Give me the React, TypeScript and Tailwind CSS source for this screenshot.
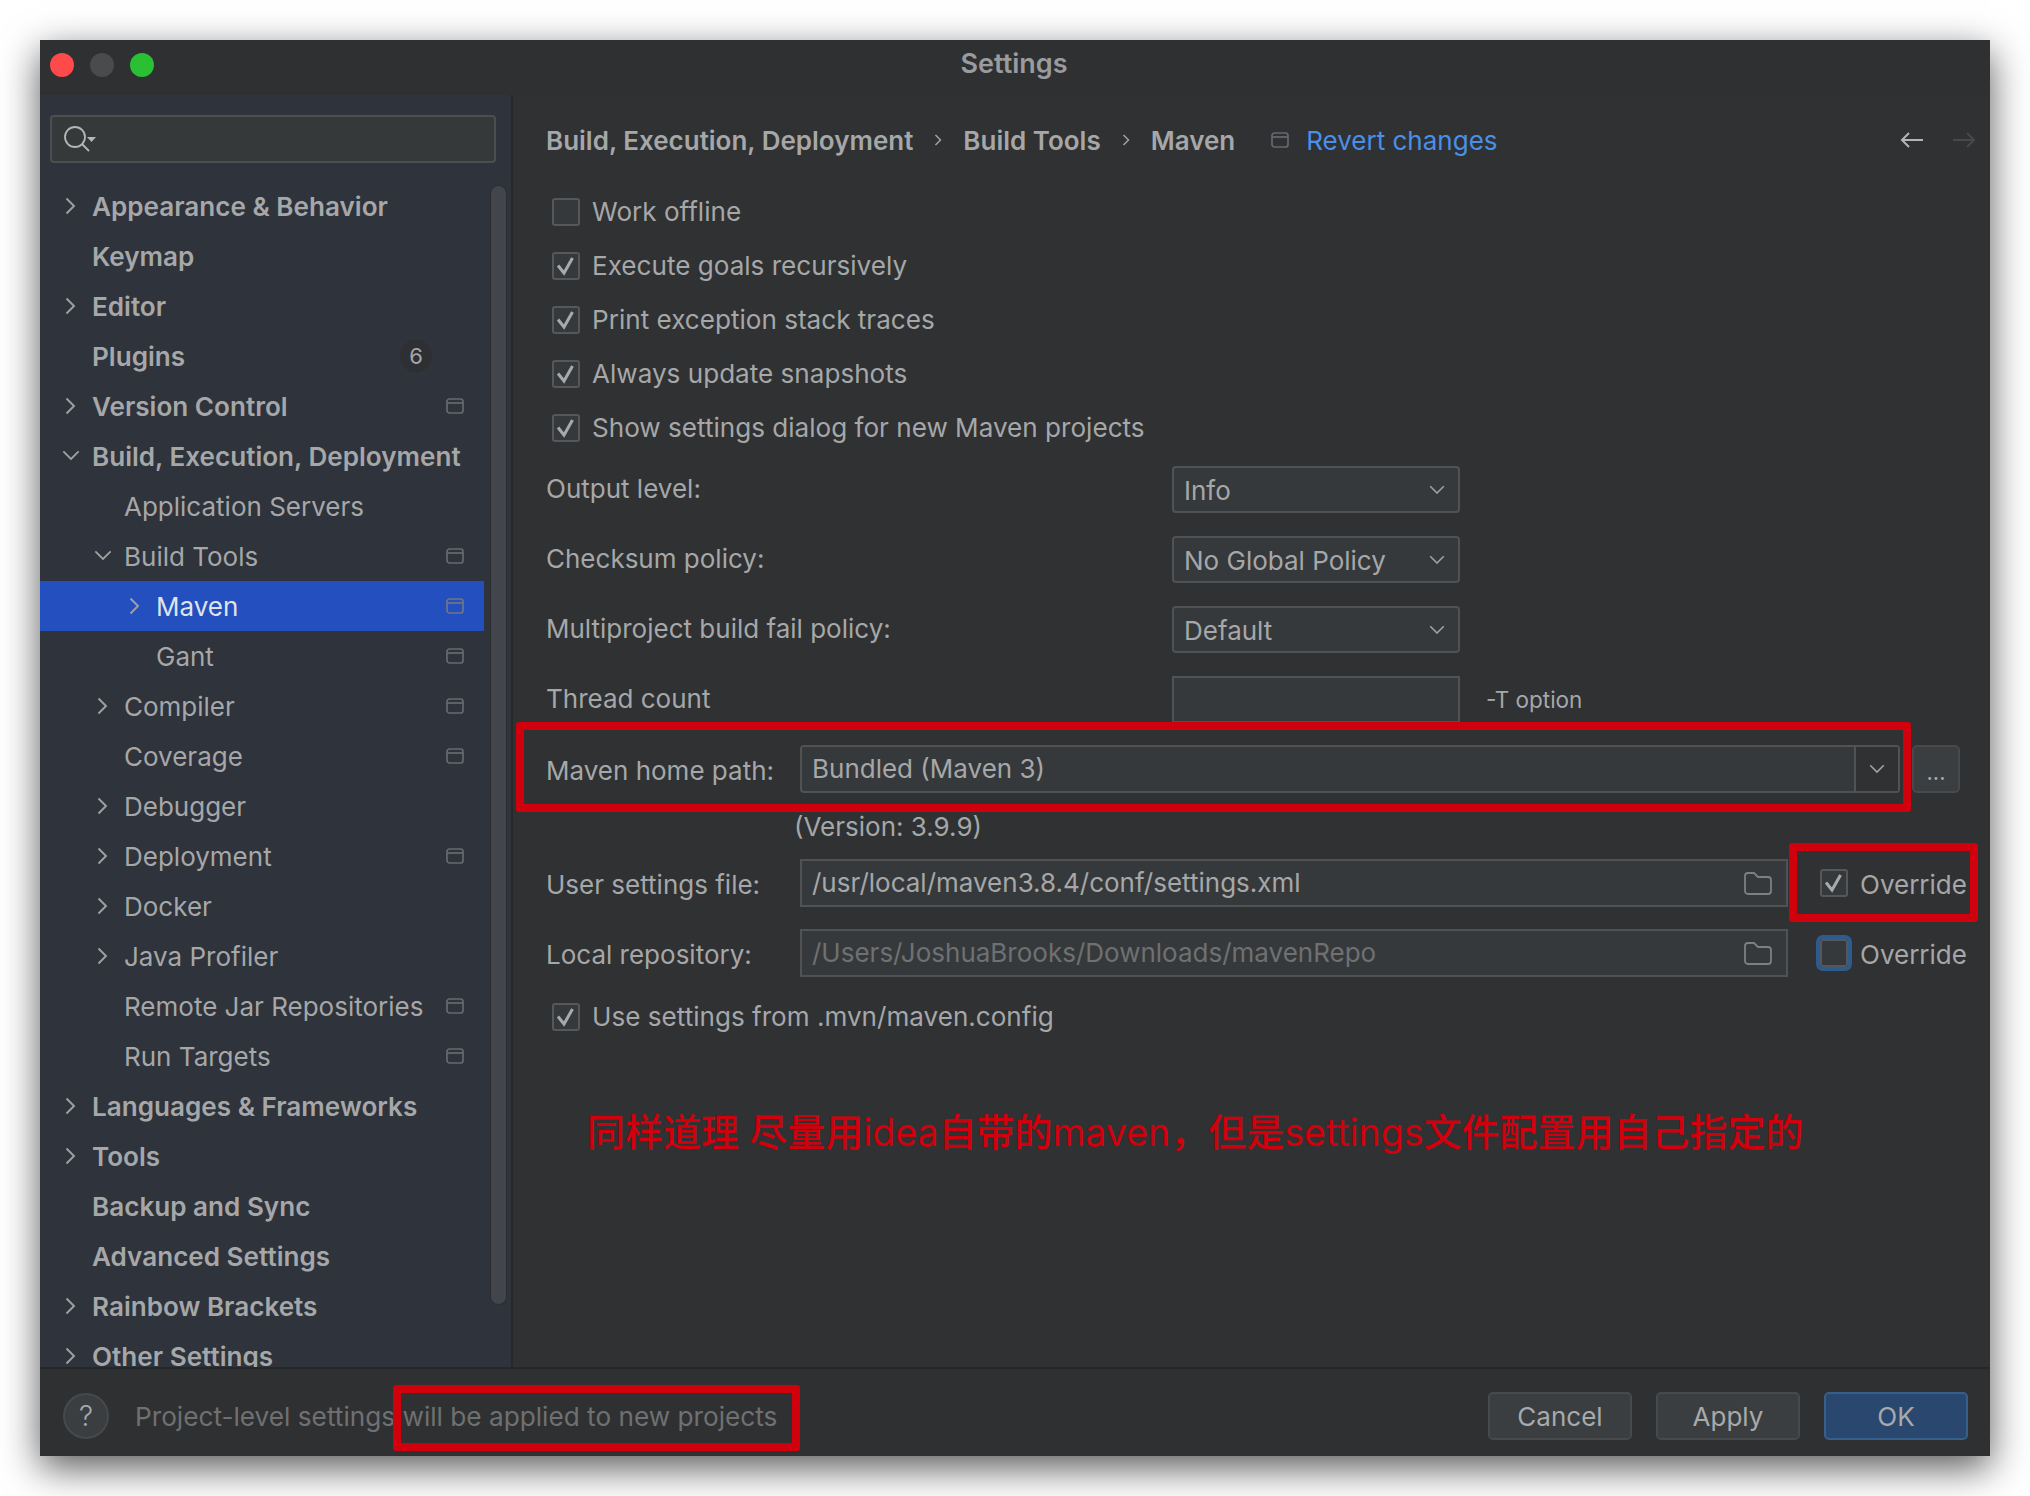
import type { ReactNode } from "react";

interface TreeItem {
  label: string;
  level: 1 | 2 | 3;
  arrow?: "right" | "down";
  strong?: boolean;
  page?: boolean;
  badge?: string;
  selected?: boolean;
}

const treeItems: TreeItem[] = [
  { label: "Appearance & Behavior", level: 1, arrow: "right", strong: true },
  { label: "Keymap", level: 1, strong: true },
  { label: "Editor", level: 1, arrow: "right", strong: true },
  { label: "Plugins", level: 1, strong: true, badge: "6" },
  { label: "Version Control", level: 1, arrow: "right", strong: true, page: true },
  { label: "Build, Execution, Deployment", level: 1, arrow: "down", strong: true },
  { label: "Application Servers", level: 2 },
  { label: "Build Tools", level: 2, arrow: "down", page: true },
  { label: "Maven", level: 3, arrow: "right", page: true, selected: true },
  { label: "Gant", level: 3, page: true },
  { label: "Compiler", level: 2, arrow: "right", page: true },
  { label: "Coverage", level: 2, page: true },
  { label: "Debugger", level: 2, arrow: "right" },
  { label: "Deployment", level: 2, arrow: "right", page: true },
  { label: "Docker", level: 2, arrow: "right" },
  { label: "Java Profiler", level: 2, arrow: "right" },
  { label: "Remote Jar Repositories", level: 2, page: true },
  { label: "Run Targets", level: 2, page: true },
  { label: "Languages & Frameworks", level: 1, arrow: "right", strong: true },
  { label: "Tools", level: 1, arrow: "right", strong: true },
  { label: "Backup and Sync", level: 1, strong: true },
  { label: "Advanced Settings", level: 1, strong: true },
  { label: "Rainbow Brackets", level: 1, arrow: "right", strong: true },
  { label: "Other Settings", level: 1, arrow: "right", strong: true },
];

function ChevronRight() {
  return (
    <svg width="11" height="18" viewBox="0 0 11 18" fill="none" stroke="#a0a1a3" strokeWidth="1.900">
      <path d="M1.500 1.500 9 9l-7.500 7.500" />
    </svg>
  );
}

function ChevronDown({ color = "#a0a1a3", size = 18 }: { color?: string; size?: number }) {
  return (
    <svg width={size} height={size * 0.6} viewBox="0 0 20 12" fill="none" stroke={color} strokeWidth="2">
      <path d="M1.500 1.500 10 10l8.500-8.500" />
    </svg>
  );
}

function PageIcon({ dim }: { dim?: boolean }) {
  return (
    <svg width="18" height="16" viewBox="0 0 18 16" fill="none" stroke={dim ? "#6f7584" : "#666a70"} strokeWidth="1.700">
      <rect x="1" y="1" width="16" height="14" rx="2.500" />
      <path d="M1 5h16" />
    </svg>
  );
}

function TreeRow({ item }: { item: TreeItem }) {
  const padding = item.level === 1 ? "pl-[52px]" : item.level === 2 ? "pl-[84px]" : "pl-[116px]";
  return (
    <div className={`flex h-[50px] shrink-0 items-center pr-5 ${padding} ${item.selected ? "bg-[#234fbf]" : ""}`}>
      {item.arrow && (
        <span className="-ml-[32px] flex w-[32px] shrink-0">
          {item.arrow === "right" ? (
            <span className="ml-[5px]">
              <ChevronRight />
            </span>
          ) : (
            <span className="ml-[2px] -translate-y-[1px]">
              <ChevronDown />
            </span>
          )}
        </span>
      )}
      <span
        className={`flex-1 truncate leading-[39px] ${item.strong ? "text-[26.100px] font-semibold" : "text-[26px] font-normal"} ${
          item.selected ? "text-[#dfe3ea]" : "text-[#a6a7a8]"
        }`}
      >
        {item.label}
      </span>
      {item.badge && (
        <span className="mr-[32px] flex h-[32px] w-[32px] items-center justify-center rounded-full bg-[#2d2f33] text-[22px] text-[#a6a7a8]">
          {item.badge}
        </span>
      )}
      {item.page && <PageIcon dim={item.selected} />}
    </div>
  );
}

function Checkbox({ checked, focus }: { checked?: boolean; focus?: boolean }) {
  return (
    <span
      className={`flex h-[28px] w-[28px] shrink-0 items-center justify-center rounded-[3px] border-2 border-[#55585b] bg-[#36393b] ${
        focus ? "outline-[4px] outline-[#2f5a8e]" : ""
      }`}
    >
      {checked && (
        <svg width="24" height="24" viewBox="0 0 24 24" fill="none" stroke="#a8a9aa" strokeWidth="3">
          <path d="M4 11.500 10 19 18.500 4" />
        </svg>
      )}
    </span>
  );
}

function CheckRow({ label, checked }: { label: string; checked?: boolean }) {
  return (
    <div className="flex h-[54px] items-center pl-[6px]">
      <Checkbox checked={checked} />
      <span className="ml-[12px] text-[26.100px] text-[#a6a7a8]">{label}</span>
    </div>
  );
}

function ComboRow({ label, value, last }: { label: string; value: string; last?: boolean }) {
  return (
    <div className={`flex h-[47px] items-center ${last ? "" : "mb-[23px]"}`}>
      <span className="w-[626px] -translate-y-[1px] text-[26px] text-[#a6a7a8]">{label}</span>
      <div className="flex h-[47px] w-[288px] items-center justify-between rounded-[4px] border-2 border-[#505254] bg-[#36393b] pl-[10px] pr-[13px]">
        <span className="translate-y-[1px] text-[26px] text-[#a6a7a8]">{value}</span>
        <ChevronDown size={16} />
      </div>
    </div>
  );
}

function FolderIcon() {
  return (
    <svg width="28" height="23" viewBox="0 0 28 23" fill="none" stroke="#7d8083" strokeWidth="1.800">
      <path d="M1 4a3 3 0 0 1 3-3h6l4 4h10a3 3 0 0 1 3 3v11a3 3 0 0 1-3 3H4a3 3 0 0 1-3-3z" />
    </svg>
  );
}

function PathRow({ label, value, checked, dim, focus }: { label: string; value: string; checked?: boolean; dim?: boolean; focus?: boolean }) {
  return (
    <div className="flex h-[48px] items-center">
      <span className="w-[254px] translate-y-[1px] text-[26px] text-[#a6a7a8]">{label}</span>
      <div className="flex h-[48px] w-[988px] items-center justify-between border-2 border-[#505254] bg-[#36393b] pl-[10px] pr-[14px]">
        <span className={`-translate-y-[1px] text-[26px] ${dim ? "text-[#6f7071]" : "text-[#a6a7a8]"}`}>{value}</span>
        <FolderIcon />
      </div>
      <span className="ml-[32px]">
        <Checkbox checked={checked} focus={focus} />
      </span>
      <span className="ml-[12px] translate-y-[1px] text-[26px] text-[#a6a7a8]">Override</span>
    </div>
  );
}

function FooterButton({ children, primary }: { children: ReactNode; primary?: boolean }) {
  return (
    <button
      className={`flex h-[48px] w-[144px] items-center justify-center rounded-[5px] border-2 pt-[2px] text-[26px] text-[#a8a9aa] ${
        primary ? "border-[#35608c] bg-[#2a476f]" : "border-[#47494b] bg-[#3a3e40]"
      }`}
    >
      {children}
    </button>
  );
}

function Crumb() {
  return (
    <svg className="mx-[21px]" width="8" height="14" viewBox="0 0 8 14" fill="none" stroke="#a0a1a3" strokeWidth="1.500">
      <path d="m1.500 2 5 5-5 5" />
    </svg>
  );
}

function Annotation({ className }: { className: string }) {
  return <div className={`absolute rounded-[3px] border-[8px] border-[#d0000c] ${className}`} />;
}

export default function App() {
  return (
    <div className="relative h-[1496px] w-[2030px] overflow-hidden bg-white p-[40px] font-['Inter','Noto_Sans_CJK_SC',sans-serif]">
      <div className="flex h-[1416px] w-[1950px] flex-col bg-[#2f3133] shadow-[0_12px_36px_rgba(0,0,0,0.65)]">
        {/* title bar */}
        <div className="relative flex h-[55px] shrink-0 items-center justify-center bg-[#2f3032] pb-[7px]">
          <div className="absolute left-[10px] top-[13px] flex gap-[16px]">
            <span className="h-[24px] w-[24px] rounded-full bg-[#fe4a4a]" />
            <span className="h-[24px] w-[24px] rounded-full bg-[#4a4b4d]" />
            <span className="h-[24px] w-[24px] rounded-full bg-[#2ac034]" />
          </div>
          <span className="ml-[-2px] text-[27px] font-semibold text-[#9a9b9d]">Settings</span>
        </div>

        <div className="flex min-h-0 flex-1">
          {/* sidebar */}
          <div className="flex w-[473px] shrink-0 flex-col border-r-2 border-[#26282a] bg-[#2f333b]">
            <div className="mx-[10px] mb-[18px] mt-[20px] flex h-[48px] w-[446px] shrink-0 items-center rounded-[4px] border-2 border-[#4c4e50] bg-[#36393a] pl-[12px]">
              <svg width="34" height="26" viewBox="0 0 34 26" fill="none" stroke="#b4b5b6" strokeWidth="1.800">
                <circle cx="11" cy="11" r="10" />
                <path d="m18 18 7 7" />
                <path d="M23 11h9l-4.500 5z" fill="#b4b5b6" stroke="none" />
              </svg>
            </div>
            <div className="flex min-h-0 flex-1">
              <div className="flex w-[444px] shrink-0 flex-col overflow-hidden">
                {treeItems.map((item) => (
                  <TreeRow key={item.label} item={item} />
                ))}
              </div>
              <div className="ml-[6px] mt-[4px] h-[1120px] w-[17px] rounded-full border border-[#2a2c30] bg-[#42454c]" />
            </div>
          </div>

          {/* content */}
          <div className="flex min-w-0 flex-1 flex-col pl-[33px]">
            <div className="flex h-[90px] shrink-0 items-center pr-[14px]">
              <span className="text-[26px] font-semibold text-[#a6a7a8]">Build, Execution, Deployment</span>
              <Crumb />
              <span className="text-[26px] font-semibold text-[#a6a7a8]">Build Tools</span>
              <Crumb />
              <span className="text-[26px] font-semibold text-[#a6a7a8]">Maven</span>
              <span className="ml-[36px]">
                <PageIcon />
              </span>
              <span className="ml-[17px] text-[26px] text-[#4a8fe8]">Revert changes</span>
              <div className="ml-auto flex items-center gap-[28px]">
                <svg width="24" height="18" viewBox="0 0 24 18" fill="none" stroke="#b4b5b6" strokeWidth="2">
                  <path d="M23 9H2M9 2 2 9l7 7" />
                </svg>
                <svg width="24" height="18" viewBox="0 0 24 18" fill="none" stroke="#48494b" strokeWidth="2">
                  <path d="M1 9h21M15 2l7 7-7 7" />
                </svg>
              </div>
            </div>

            <CheckRow label="Work offline" />
            <CheckRow label="Execute goals recursively" checked />
            <CheckRow label="Print exception stack traces" checked />
            <CheckRow label="Always update snapshots" checked />
            <CheckRow label="Show settings dialog for new Maven projects" checked />

            <div className="mt-[11px]">
              <ComboRow label="Output level:" value="Info" />
              <ComboRow label="Checksum policy:" value="No Global Policy" />
              <ComboRow label="Multiproject build fail policy:" value="Default" />
              <div className="flex h-[47px] items-center">
                <span className="w-[626px] -translate-y-[1px] text-[26px] text-[#a6a7a8]">Thread count</span>
                <div className="h-[47px] w-[288px] border-2 border-[#505254] bg-[#36393b]" />
                <span className="ml-[26px] text-[22.500px] text-[#a6a7a8]">-T option</span>
              </div>
            </div>

            <div className="mt-[22px] flex h-[48px] items-center">
              <span className="w-[254px] translate-y-[1px] text-[26px] text-[#a6a7a8]">Maven home path:</span>
              <div className="flex h-[48px] w-[1100px] items-center rounded-[4px] border-2 border-[#505254] bg-[#36393b]">
                <span className="flex-1 -translate-y-[1px] pl-[10px] text-[26px] text-[#a6a7a8]">Bundled (Maven 3)</span>
                <span className="flex h-full w-[44px] items-center justify-center border-l-2 border-[#505254] bg-[#2f3133]">
                  <ChevronDown size={16} />
                </span>
              </div>
              <button className="ml-[12px] flex h-[48px] w-[48px] items-end justify-center rounded-[5px] border-2 border-[#47494b] bg-[#3a3e40] pb-[8px] text-[22px] leading-none text-[#a8a9aa]">
                ...
              </button>
            </div>

            <div className="ml-[248px] flex h-[66px] items-center">
              <span className="text-[26px] text-[#a6a7a8]">(Version: 3.9.9)</span>
            </div>

            <PathRow label="User settings file:" value="/usr/local/maven3.8.4/conf/settings.xml" checked />
            <div className="h-[22px]" />
            <PathRow label="Local repository:" value="/Users/JoshuaBrooks/Downloads/mavenRepo" dim focus />
            <div className="mt-[13px]">
              <CheckRow label="Use settings from .mvn/maven.config" checked />
            </div>

            <div className="ml-[41px] mt-[60px] whitespace-nowrap text-[38px] font-medium text-[#d0000c]">
              同样道理 尽量用<span className="text-[37.500px] font-normal">idea</span>自带的<span className="text-[37.500px] font-normal">maven</span>，但是<span className="text-[37.500px] font-normal">settings</span>文件配置用自己指定的
            </div>
          </div>
        </div>

        {/* footer */}
        <div className="flex h-[89px] shrink-0 items-center border-t-2 border-[#25272a] bg-[#2f3032] pl-[23px] pr-[22px] pt-[6px]">
          <span className="flex h-[46px] w-[46px] items-center justify-center rounded-full border-2 border-[#47494b] bg-[#3a3e40] text-[28px] font-light text-[#a8a9aa]">
            ?
          </span>
          <span className="ml-[26px] translate-y-[1px] text-[26.200px] text-[#6f7071]">Project-level settings will be applied to new projects</span>
          <div className="ml-auto flex gap-[24px]">
            <FooterButton>Cancel</FooterButton>
            <FooterButton>Apply</FooterButton>
            <FooterButton primary>OK</FooterButton>
          </div>
        </div>
      </div>

      {/* red boxes drawn over the screenshot */}
      <Annotation className="left-[516px] top-[722px] h-[90px] w-[1395px]" />
      <Annotation className="left-[1789px] top-[843px] h-[79px] w-[189px]" />
      <Annotation className="left-[393px] top-[1385px] h-[66px] w-[407px]" />
    </div>
  );
}
